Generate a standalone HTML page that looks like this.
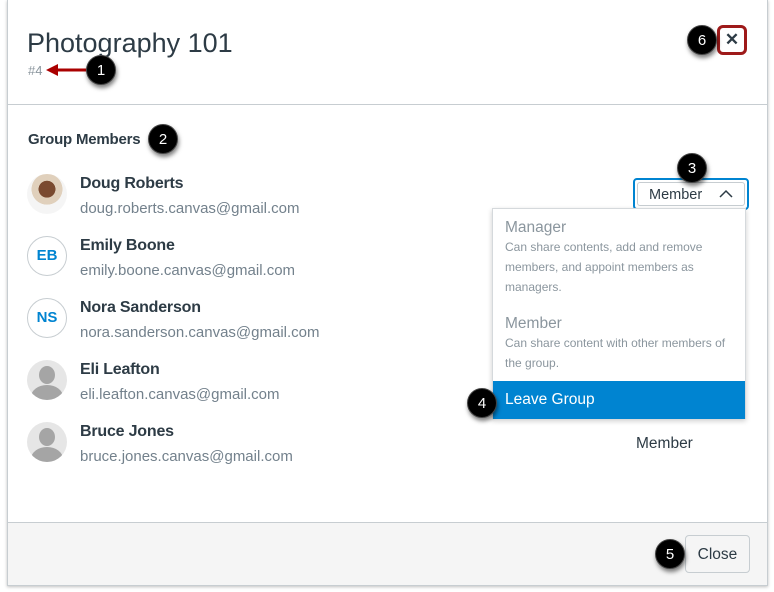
<!DOCTYPE html>
<html><head><style>
*{margin:0;padding:0;box-sizing:border-box}
body{width:774px;height:592px;background:#fff;font-family:"Liberation Sans",sans-serif;position:relative;overflow:hidden;color:#2d3b45}
.frame{position:absolute;left:7px;top:0;width:761px;height:586px;border:1px solid #c7cdd1;border-top:none;box-shadow:0 1px 3px rgba(0,0,0,.25)}
.abs{position:absolute}
.badge{position:absolute;width:30px;height:30px;border-radius:50%;background:#000;color:#fff;font-size:15px;text-align:center;line-height:30px;box-shadow:1px 3px 4px rgba(0,0,0,.5);border:1px solid #444}
.name{position:absolute;left:80px;font-size:16px;font-weight:bold;color:#2d3b45;letter-spacing:-0.2px}
.mail{position:absolute;left:80px;font-size:15px;color:#73818c}
.av{position:absolute;left:27px;width:40px;height:40px;border-radius:50%;border:1px solid #c7cdd1;color:#0084d1;font-weight:bold;font-size:15px;text-align:center;line-height:38px;background:#fff}
.ph{position:absolute;left:27px;width:40px;height:40px;border-radius:50%;background:#e6e6e6;overflow:hidden}
.ph:before{content:"";position:absolute;left:12px;top:6px;width:16px;height:18px;border-radius:50%;background:#a5a5a5}
.ph:after{content:"";position:absolute;left:4px;top:25px;width:32px;height:24px;border-radius:50% 50% 0 0;background:#a5a5a5}
.ttl{font-size:15.5px;color:#8b969e}
.desc{font-size:12px;color:#8b969e;line-height:20px}
</style></head><body>
<div class="frame"></div>
<div class="abs" style="left:27px;top:28px;font-size:27px;color:#2d3b45">Photography 101</div>
<div class="abs" style="left:28px;top:63px;font-size:13px;color:#8b969e">#4</div>
<svg class="abs" style="left:44px;top:62px" width="46" height="16"><path d="M44 8H12" stroke="#a00" stroke-width="3"/><path d="M2 8L14 2V14Z" fill="#a00"/></svg>
<div class="badge" style="left:86px;top:55px">1</div>
<div class="abs" style="left:717px;top:25px;width:30px;height:30px;border:3px solid #9e1a1a;border-radius:6px;background:#fff"></div>
<div class="abs" style="left:717px;top:25px;width:30px;height:30px;text-align:center;line-height:30px;font-size:17px;font-weight:bold;color:#2d3b45">✕</div>
<div class="badge" style="left:687px;top:25px">6</div>
<div class="abs" style="left:8px;top:104px;width:759px;height:1px;background:#c7cdd1"></div>
<div class="abs" style="left:28px;top:131px;font-size:15px;font-weight:bold;letter-spacing:-0.2px">Group Members</div>
<div class="badge" style="left:148px;top:124px">2</div>

<div class="av" style="top:174px;background:radial-gradient(circle at 50% 38%,#7a4a30 0 26%,#e0d0bc 27% 48%,#f5f5f5 49%);border:none"></div>
<div class="name" style="top:175px">Doug Roberts</div><div class="mail" style="top:200px">doug.roberts.canvas@gmail.com</div>
<div class="av" style="top:236px">EB</div>
<div class="name" style="top:237px">Emily Boone</div><div class="mail" style="top:262px">emily.boone.canvas@gmail.com</div>
<div class="av" style="top:298px">NS</div>
<div class="name" style="top:299px">Nora Sanderson</div><div class="mail" style="top:324px">nora.sanderson.canvas@gmail.com</div>
<div class="ph" style="top:360px"></div>
<div class="name" style="top:361px">Eli Leafton</div><div class="mail" style="top:386px">eli.leafton.canvas@gmail.com</div>
<div class="ph" style="top:422px"></div>
<div class="name" style="top:423px">Bruce Jones</div><div class="mail" style="top:448px">bruce.jones.canvas@gmail.com</div>
<div class="abs" style="left:636px;top:435px;font-size:15.5px;color:#2d3b45">Member</div>

<div class="abs" style="left:633px;top:178px;width:116px;height:32px;border:2px solid #0084d1;border-radius:4px;background:#fff"></div>
<div class="abs" style="left:637px;top:182px;width:108px;height:24px;border:1px solid #c7cdd1;border-radius:3px"></div>
<div class="abs" style="left:649px;top:187px;font-size:14.5px">Member</div>
<svg class="abs" style="left:719px;top:189px" width="14" height="9"><path d="M1 8L7 2L13 8" fill="none" stroke="#2d3b45" stroke-width="1.5"/></svg>
<div class="badge" style="left:677px;top:153px">3</div>

<div class="abs" style="left:492px;top:208px;width:254px;height:211px;background:#fff;border:1px solid #d5d9dc;box-shadow:0 2px 5px rgba(0,0,0,.2)"></div>
<div class="abs" style="left:505px;top:219px;width:230px"><div class="ttl">Manager</div><div class="desc">Can share contents, add and remove members, and appoint members as managers.</div></div>
<div class="abs" style="left:505px;top:315px;width:230px"><div class="ttl">Member</div><div class="desc">Can share content with other members of the group.</div></div>
<div class="abs" style="left:493px;top:381px;width:252px;height:38px;background:#0084d1;color:#fff;font-size:15.5px;padding:10px 12px">Leave Group</div>
<div class="badge" style="left:467px;top:388px">4</div>

<div class="abs" style="left:8px;top:522px;width:759px;height:63px;background:#f5f5f5;border-top:1px solid #c7cdd1"></div>
<div class="abs" style="left:685px;top:535px;width:65px;height:38px;background:#f5f5f5;border:1px solid #c7cdd1;border-radius:4px;font-size:15.5px;text-align:center;line-height:37px;color:#2d3b45">Close</div>
<div class="badge" style="left:655px;top:539px">5</div>
</body></html>
